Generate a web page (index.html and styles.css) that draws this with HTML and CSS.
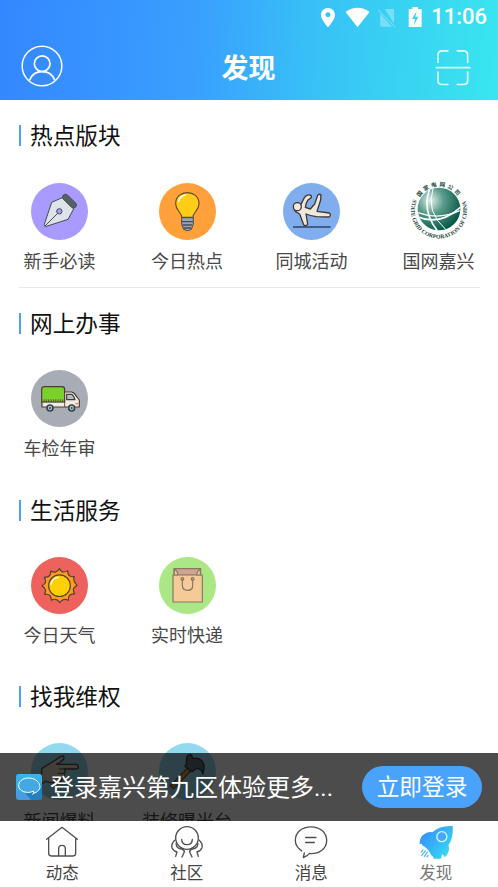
FILE: index.html
```html
<!DOCTYPE html>
<html lang="zh-CN">
<head>
<meta charset="utf-8">
<title>发现</title>
<link rel="stylesheet" href="styles.css">
</head>
<body>
<div class="app">
  <header class="header">
    <div class="status">
      <svg class="status-icons" viewBox="60 15 310 66" width="103" height="22">
        <path fill="#fff" fill-rule="evenodd" d="M84 21c-12 0-21 9-21 21 0 15 21 37 21 37s21-22 21-37c0-12-9-21-21-21zm0 13a7.500 7.500 0 1 1 0 15 7.500 7.500 0 0 1 0-15z"/>
        <path fill="#fff" d="M173 79L137 33q36-25 72 0z"/>
        <path fill="#fff" opacity=".32" d="M255 24h24q4 0 4 4v40zM241 37l36 40h-32q-4 0-4-4z"/>
        <path stroke="#fff" stroke-width="3" opacity=".4" d="M236 27l51 52"/>
        <path fill="#fff" fill-rule="evenodd" d="M338 18h17v6h11v54h-39V24h11zM351 30l-14 24h9l-3 18 13-25h-9z"/>
      </svg>
      <span class="clock">11:06</span>
    </div>
    <div class="titlebar">
      <svg viewBox="63 136 125 126" width="42" height="42" fill="none" stroke="#fff" stroke-width="5"><circle cx="125.500" cy="199" r="59.500" stroke-width="4.500"/><circle cx="126" cy="192" r="23.500"/><path d="M88 242c13-35 63-35 76 0"/></svg>
      <h1>发现</h1>
      <svg class="scan" viewBox="406 145 108 110" width="36" height="37" fill="none" stroke="#fff" stroke-width="5" stroke-linecap="round" opacity=".86"><path d="M445 150h-17q-13 0-13 13v22M473 150h18q13 0 13 13v22M415 214v24q0 13 13 13h17M473 251h18q13 0 13-13v-24M410 200.500h100"/></svg>
    </div>
  </header>

  <main class="content">
    <section class="section section-divided">
      <h2>热点版块</h2>
      <div class="grid">
        <div class="item">
          <svg class="icon" viewBox="62 39 171 171"><circle cx="147.500" cy="124.500" r="85.500" fill="#a99aff"/><g stroke="#414b50" stroke-width="3" stroke-linejoin="round"><path fill="#dce4e8" d="M156 83l34 34-17 31-68 22q-4-2-3-7l22-66z"/><path fill="#566067" d="M159 75q6-5 12 0l25 24q5 6 0 12-6 6-12 1l-25-25q-5-6 0-12z"/><path d="M104 168l38-38"/><circle cx="147" cy="124" r="8" fill="#a99aff"/></g></svg>
          <span>新手必读</span>
        </div>
        <div class="item">
          <svg class="icon" viewBox="39 39 171 171"><circle cx="124.500" cy="124.500" r="85.500" fill="#ffa03a"/><path d="M107 142c0-16-18-20-18-41 0-44 70-44 70 0 0 21-18 25-18 41z" fill="#ffcd17" stroke="#654b27" stroke-width="3.500"/><path d="M98 94q4-16 20-19" fill="none" stroke="#fff" stroke-width="4" stroke-linecap="round"/><path d="M107 143h35v20l-6 15q-12 9-23 0l-6-15z" fill="#9ba5af" stroke="#484d58" stroke-width="3"/><path d="M108 155h33M109 165h30M112 174h24" stroke="#484d58" stroke-width="4"/></svg>
          <span>今日热点</span>
        </div>
        <div class="item">
          <svg class="icon" viewBox="52 39 171 171"><circle cx="137.500" cy="124.500" r="85.500" fill="#80aded"/><path d="M82 171h113" stroke="#34435b" stroke-width="4"/><path d="M104 107L116 83q8-12 19-7 5 5-1 9-8 3-12 14l-3 13 15 5 13-15 9-26q5-6 10-1l-1 15-11 34 37 5q7 6-1 12l-38-1q-20-3-31-8l5 30q-5 9-12 2l-12-32-13-8q-7-6 2-7z" fill="#eee9df" stroke="#42382f" stroke-width="4" stroke-linejoin="round"/><circle cx="95" cy="110" r="12" fill="#eee9df" stroke="#42382f" stroke-width="4"/></svg>
          <span>同城活动</span>
        </div>
        <div class="item">
          <svg class="icon emblem" viewBox="44 39 171 171">
            <defs><radialGradient id="globe" cx=".3" cy=".3" r=".78"><stop stop-color="#e2f0ec"/><stop offset=".4" stop-color="#5a9b8a"/><stop offset="1" stop-color="#005442"/></radialGradient><path id="arcTop" d="M73 82A68 68 0 0 1 189 82"/><path id="arcBottom" d="M54 88A84 84 0 1 0 208 88"/><clipPath id="globeClip"><circle cx="131" cy="117" r="64"/></clipPath></defs>
            <circle cx="131" cy="117" r="64" fill="url(#globe)"/>
            <g clip-path="url(#globeClip)" fill="none" stroke="#fff" stroke-width="5"><path d="M103 57Q78 123 128 185"/><path d="M113 56Q91 126 151 178" stroke-width="3"/><path d="M67 140Q132 169 195 112"/><path d="M67 128Q132 151 193 122" stroke-width="4"/></g>
            <text class="emblem-cn"><textPath href="#arcTop" textLength="134">国家电网公司</textPath></text>
            <text class="emblem-en"><textPath href="#arcBottom" textLength="328">STATE GRID CORPORATION OF CHINA</textPath></text>
          </svg>
          <span>国网嘉兴</span>
        </div>
      </div>
    </section>

    <section class="section section-tall">
      <h2>网上办事</h2>
      <div class="grid">
        <div class="item">
          <svg class="icon" viewBox="62 31 171 171"><circle cx="147.500" cy="116.500" r="85.500" fill="#a8adb5"/><g stroke="#4b3b32" stroke-width="3.500" stroke-linejoin="round"><path fill="#f2ebe2" d="M95 126h67V97h22q9 2 15 14l8 10v21H95z"/><path fill="#79d12c" d="M94 127V89q0-8 10-8h50q9 0 9 8v38z"/><path fill="#a9bfcc" d="M169 104h15q6 3 10 16h-25z"/><path d="M163 126v16M101 127v-8m7 8v-8m7 8v-8m7 8v-8m7 8v-8m7 8v-8m7 8v-8m7 8v-8m7 8v-8" stroke-width="2.500"/></g><path d="M195 132h9" stroke="#ff8a63" stroke-width="5"/><g fill="#b5c6d3" stroke="#354450" stroke-width="5"><circle cx="119" cy="145" r="9"/><circle cx="184" cy="145" r="9"/></g><circle cx="119" cy="145" r="3" fill="#354450"/><circle cx="184" cy="145" r="3" fill="#354450"/></svg>
          <span>车检年审</span>
        </div>
      </div>
    </section>

    <section class="section">
      <h2>生活服务</h2>
      <div class="grid">
        <div class="item">
          <svg class="icon" viewBox="62 35 171 171"><circle cx="147.500" cy="120.500" r="85.500" fill="#ed625d"/><path fill="#ff9a23" stroke="#55422b" stroke-width="3.500" stroke-linejoin="round" d="M148 70q4 10 12 10 7 0 12-4 0 12 7 16 5 3 13 1-4 10 0 16 3 5 8 12-10 4-11 11 0 7 4 14-11-1-16 5-4 5-3 14-9-5-15-2-6 2-11 9-5-9-12-10-6-1-13 3 0-12-6-16-6-3-14-2 5-10 1-16-3-6-9-10 10-5 11-12 0-7-4-13 12 0 16-6 4-5 3-13 9 5 15 3 7-2 12-10z"/><circle cx="147.500" cy="121" r="32.500" fill="#ffcf05" stroke="#55422b" stroke-width="3.500"/><path d="M122 116q4-18 22-20" fill="none" stroke="#fff" stroke-width="4" stroke-linecap="round"/></svg>
          <span>今日天气</span>
        </div>
        <div class="item">
          <svg class="icon" viewBox="445 35 171 171"><circle cx="530.500" cy="120.500" r="85.500" fill="#abe785"/><g stroke="#897568" stroke-width="3.500"><path fill="#cea68d" d="M490 70h80v20h-80z"/><path fill="#f4ca96" d="M487 89h88v81h-88z"/><path fill="#f4ca96" d="M491 72q12 7 10 17h-10zM569 72q-12 7-10 17h10z"/><path fill="none" d="M515 102v17q0 16 16 16t15-16v-17"/><circle cx="515" cy="101" r="4" fill="#cea68d"/><circle cx="546" cy="101" r="4" fill="#cea68d"/></g></svg>
          <span>实时快递</span>
        </div>
      </div>
    </section>

    <section class="section">
      <h2>找我维权</h2>
      <div class="grid">
        <div class="item">
          <svg class="icon" viewBox="92 39 171 171"><circle cx="177.500" cy="124.500" r="85.500" fill="#93daf0"/><path fill="#dccfc1" stroke="#55483f" stroke-width="4" stroke-linejoin="round" d="M124 116l22-14 36-23q9-4 9 5-3 9-22 19h57q8 0 8 7t-8 7h-34q6 8-1 13 4 10-6 14 0 13-12 14-26 2-36-5l-14 9z"/><path d="M176 117h16M172 130h19M168 144h17" stroke="#55483f" stroke-width="3"/></svg>
          <span>新闻爆料</span>
        </div>
        <div class="item">
          <svg class="icon" viewBox="24 9 171 171"><circle cx="109.500" cy="94.500" r="85.500" fill="#93daf0"/><path d="M120 82l-58 61" stroke="#50402f" stroke-width="17"/><path d="M120 82l-56 59" stroke="#d59045" stroke-width="11"/><path fill="#647078" stroke="#343c41" stroke-width="4" stroke-linejoin="round" d="M107 53q2-8 10-10 6 0 6 7l2 5q16-3 26 6 9 8 8 25l-3 16q-5-14-15-16-9-1-13 6l-7 3-19-16 4-8z"/></svg>
          <span>装修曝光台</span>
        </div>
      </div>
    </section>

    <aside class="login-bar">
      <svg viewBox="48 132 78 78" width="26" height="26"><defs><linearGradient id="badge" x2="0" y2="1"><stop stop-color="#37b5ee"/><stop offset="1" stop-color="#4799dc"/></linearGradient></defs><rect x="48" y="132" width="78" height="78" rx="8" fill="url(#badge)"/><path d="M113 153l13 13v36q0 8-8 8H93l-17-20z" fill="#247fbb"/><path d="M101 190c35-11 17-46-15-46-36 0-42 39-6 43 8 1 16-1 20-4q3 5-2 10z" fill="#42a9e5" stroke="#fff" stroke-width="3"/></svg>
      <span class="login-text">登录嘉兴第九区体验更多...</span>
      <button class="login-btn">立即登录</button>
    </aside>
  </main>

  <nav class="tabs">
    <div class="tab">
      <svg viewBox="135 288 102 100" width="34" height="33" fill="none" stroke="#505050" stroke-width="4" stroke-linejoin="round" stroke-linecap="round"><path d="M140 330l46-36 46 36M146 327v45q0 8 8 8h65q8 0 8-8v-45M176 380v-22q0-10 10-10t10 10v22"/></svg>
      <span>动态</span>
    </div>
    <div class="tab">
      <svg viewBox="509 288 102 100" width="34" height="33" fill="none" stroke="#505050" stroke-width="4" stroke-linejoin="round" stroke-linecap="round"><circle cx="560" cy="326" r="34"/><path d="M544 330q0 16 16 16t16-16M524 332q-12 11-9 23 3 9 15 13l-4 13M596 332q12 11 9 23-3 9-15 13l4 13M527 343q1 10 7 13l14 5q6 4 3 9l-6 13M593 343q-1 10-7 13l-14 5q-6 4-3 9l6 13"/></svg>
      <span>社区</span>
    </div>
    <div class="tab">
      <svg viewBox="138 286 102 101" width="34" height="33" fill="none" stroke="#505050" stroke-width="4" stroke-linejoin="round" stroke-linecap="round"><path d="M169 369l-3 14q13-4 18-12c29 2 52-14 52-38 0-26-21-42-47-42-27 0-47 16-47 41 0 13 7 23 19 31M173 323h31M173 338h26"/></svg>
      <span>消息</span>
    </div>
    <div class="tab tab-active">
      <svg viewBox="511 286 102 102" width="34" height="34"><defs><linearGradient id="rocket" x1="0" y1=".2" x2="1" y2="1"><stop stop-color="#368bff"/><stop offset="1" stop-color="#36e6ef"/></linearGradient></defs><path fill="url(#rocket)" d="M612 289q3 36-13 58 7 19-11 36-2-7-8-10l-3 14h-21q-3-9-9-11-4-13-19-25-7-2-9-9l-6 2q-1-25 16-32 10-7 22-4 23-21 61-19z"/><circle cx="579.500" cy="321" r="15" fill="#42a9ff" stroke="#d8f4ff" stroke-width="4"/><path d="M524 360l-7 8M531 362l-13 17M537 366l-11 16M539 376l-5 7" stroke="#42b1fb" stroke-width="3.500"/></svg>
      <span>发现</span>
    </div>
  </nav>
</div>
</body>
</html>
```
FILE: styles.css
```css
* { box-sizing: border-box; }
body {
  margin: 0;
  background: #fff;
  font-family: Roboto, "Noto Sans CJK SC", sans-serif;
}
svg { display: block; flex: none; }
.app {
  display: flex;
  flex-direction: column;
  width: 498px;
  height: 887px;
  overflow: hidden;
}
.header {
  flex: none;
  height: 100px;
  color: #fff;
  background: linear-gradient(93deg, #3487ff 0%, #39a0fe 40%, #38c0f6 62%, #39e6ef 100%);
}
.status {
  display: flex;
  justify-content: flex-end;
  align-items: center;
  height: 34px;
  padding-right: 11px;
}
.status-icons { margin: 0 8px 1px 0; }
.clock {
  font-size: 22px;
  font-weight: 500;
  line-height: 34px;
}
.titlebar {
  display: flex;
  justify-content: space-between;
  align-items: center;
  height: 65px;
  padding: 0 27px 0 21px;
}
.titlebar > svg { margin-bottom: 1px; }
.titlebar > .scan { margin: 1px 0 0; }
h1 {
  margin: 4px 8px 0 7px;
  font-size: 27px;
  font-weight: 700;
  line-height: 36px;
}
.content {
  position: relative;
  flex: 1;
  min-height: 0;
  overflow: hidden;
}
.section {
  height: 186px;
  margin: 0 18px 0 19px;
  padding-top: 19px;
}
.section-divided {
  height: 188px;
  border-bottom: 1px solid #e8e8e8;
}
.section-tall { height: 187px; }
h2 {
  display: flex;
  align-items: center;
  gap: 9px;
  height: 34px;
  margin: 0;
  padding-top: 2px;
  color: #111;
  font-size: 22.7px;
  font-weight: 400;
  line-height: 34px;
}
h2::before {
  content: "";
  width: 2px;
  height: 21px;
  margin-bottom: 4px;
  background: #49a3fb;
}
.grid {
  display: grid;
  grid-template-columns: 127.5px 124.5px 127px 72px;
  padding: 30px 0 0 4.500px;
}
.section:not(.section-divided) .grid { padding-top: 29px; }
.item {
  display: flex;
  flex-direction: column;
  align-items: center;
  width: 72px;
  color: #484848;
  font-size: 18px;
  line-height: 26px;
  white-space: nowrap;
}
.icon {
  width: 57px;
  height: 57px;
  margin-bottom: 9px;
}
.emblem { overflow: visible; }
.emblem-cn {
  fill: #234d43;
  font-size: 17px;
  font-weight: 700;
}
.emblem-en {
  fill: #173d34;
  font: 700 17px "Liberation Serif", serif;
}
.login-bar {
  position: absolute;
  left: 0;
  right: 0;
  bottom: 0;
  display: flex;
  align-items: center;
  height: 68px;
  padding: 0 16px;
  color: #fff;
  background: rgba(0, 0, 0, .7);
}
.login-text {
  margin: 2px 0 0 8px;
  font-size: 24px;
  line-height: 36px;
  white-space: nowrap;
}
.login-btn {
  width: 120px;
  height: 42px;
  margin-left: auto;
  padding: 2px 0 0;
  border: 0;
  border-radius: 21px;
  color: #fff;
  background: #49a3fb;
  font: inherit;
  font-size: 22.7px;
  line-height: 40px;
}
.tabs {
  display: grid;
  grid-template-columns: repeat(4, 1fr);
  flex: none;
  height: 66px;
  background: #fff;
}
.tab {
  display: flex;
  flex-direction: column;
  align-items: center;
  gap: 3px;
  padding-top: 4px;
  color: #444;
  font-size: 16.5px;
  line-height: 24px;
}
.tab svg { height: 34px; }
.tab-active { color: #777; }
```
